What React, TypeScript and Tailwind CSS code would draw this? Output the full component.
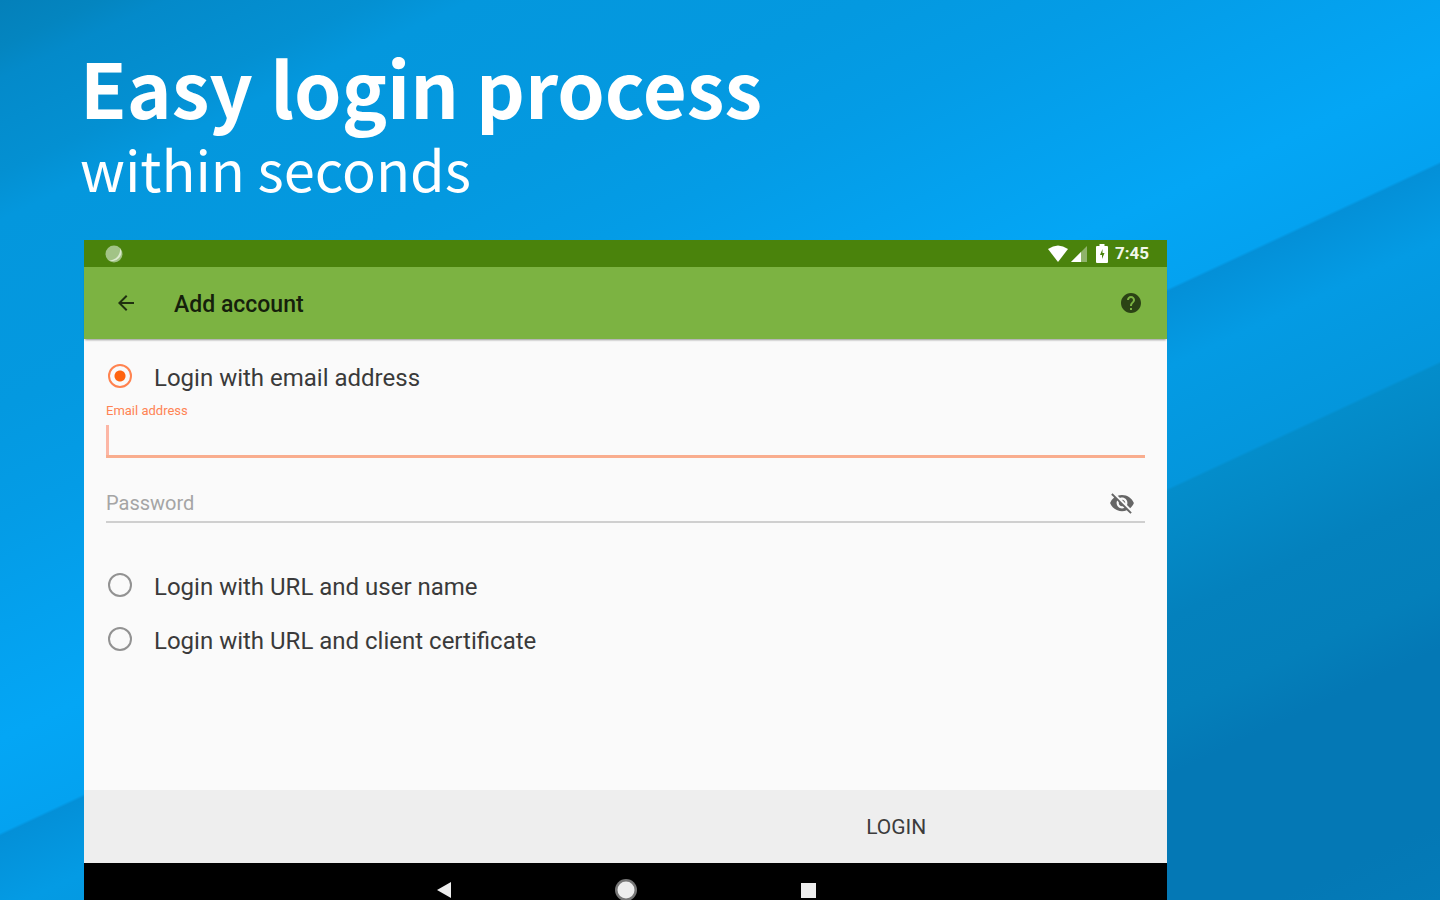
import { useState } from 'react'
import { MdArrowBack, MdHelp, MdVisibilityOff } from 'react-icons/md'

type Method = 'email' | 'url' | 'certificate'

function LoginOption({ label, checked, onSelect }: { label: string; checked: boolean; onSelect: () => void }) {
  return (
    <label className="flex h-[54px] cursor-pointer items-center gap-[22px] text-2xl text-[#3a3a3a]">
      <input
        type="radio"
        name="method"
        checked={checked}
        onChange={onSelect}
        className="ml-[2px] size-6 shrink-0 appearance-none rounded-full border-2 border-[#929292] checked:border-[#ff8350] checked:bg-[radial-gradient(circle,#ff6410_5px,transparent_6px)]"
      />
      <span className="pt-1">{label}</span>
    </label>
  )
}

function StatusBar() {
  return (
    <div className="flex h-[27px] shrink-0 items-center bg-[#4a830c] pr-[18px] pl-[21px]">
      <svg viewBox="0 0 18 18" className="size-[18px]">
        <circle cx="9" cy="9" r="8.5" fill="#a2c386" />
        <path d="M15 3a8.500 8.500 0 0 1-11 12c6 1 12-5 11-12z" fill="#dceacf" />
      </svg>
      <div className="ml-auto flex items-center">
        <svg viewBox="0 0 20 17" className="h-[17px] w-5" fill="#ffffff">
          <path d="M0 4Q10-3 20 4L10 17z" />
        </svg>
        <svg viewBox="0 0 16 16" className="ml-[3px] size-4">
          <path d="M16 0v16H0z" fill="#8fb36b" />
          <path d="M10 6v10H0z" fill="#ffffff" />
        </svg>
        <svg viewBox="0 0 12 19" className="ml-[9px] h-[19px] w-3">
          <path d="M3.500 0h5v2H11q1 0 1 1v15q0 1-1 1H1q-1 0-1-1V3q0-1 1-1h2.500z" fill="#ffffff" />
          <path d="M6.500 5L4 11h2v4l2.500-6h-2z" fill="#4a830c" />
        </svg>
        <span className="ml-[7px] text-[17px] leading-none font-bold text-[#f2f8ec]">7:45</span>
      </div>
    </div>
  )
}

function NavigationBar() {
  return (
    <nav className="flex h-[37px] shrink-0 items-center justify-center gap-[159px] overflow-hidden bg-black pt-4">
      <button type="button" aria-label="Back">
        <svg viewBox="0 0 22 22" className="size-[22px]" fill="#eeeeee">
          <path d="M3 11L17 3v16z" />
        </svg>
      </button>
      <button type="button" aria-label="Home">
        <svg viewBox="0 0 22 22" className="size-[22px]">
          <circle cx="11" cy="11" r="11" fill="#777777" />
          <circle cx="11" cy="11" r="8.500" fill="#eeeeee" />
        </svg>
      </button>
      <button type="button" aria-label="Overview">
        <svg viewBox="0 0 22 22" className="size-[22px]" fill="#eeeeee">
          <path d="M5 4h15v15H5z" />
        </svg>
      </button>
    </nav>
  )
}

export default function App() {
  const [method, setMethod] = useState<Method>('email')
  const [visible, setVisible] = useState(false)

  return (
    <main className="flex h-screen flex-col overflow-hidden bg-[linear-gradient(155deg,#0480ba_0%,#0485c0_3%,#048aca_5%,#0490d2_11%,#0497dd_14%,#0499e0_26%,#049ce6_33%,#04a1ee_40%,#04a6f5_47%,#04a2f0_53%,#0490d8_53.2%,#049be4_58%,#0496dc_65.700%,#048dcb_65.900%,#0489c6_69%,#0481bd_74%,#047fba_80%,#0478b5_84%,#0478b5_95%,#047bb8_100%)] pr-[273px] pl-21">
      <header className="-ml-1 h-60 shrink-0 pt-11 font-['Noto_Sans_CJK_SC',sans-serif] text-white">
        <h1 className="text-[76px] leading-[84px] font-bold whitespace-nowrap">Easy login process</h1>
        <p className="text-[56px] leading-[80px] whitespace-nowrap">within seconds</p>
      </header>

      <section className="flex min-h-0 flex-1 flex-col font-[Roboto,sans-serif]">
        <StatusBar />
        <div className="z-10 flex h-[72px] shrink-0 items-center bg-[#7cb342] pr-6 pl-[30px] shadow-[0_2px_2px_-1px_#00000066]">
          <button type="button" aria-label="Back">
            <MdArrowBack className="size-6 text-[#1f3010]" />
          </button>
          <h2 className="ml-9 pt-1 text-[23px] font-medium text-[#15200b]">Add account</h2>
          <button type="button" aria-label="Help" className="ml-auto">
            <MdHelp className="size-6 text-[#2b4215]" />
          </button>
        </div>

        <form className="flex min-h-0 flex-1 flex-col" onSubmit={e => e.preventDefault()}>
          <div className="min-h-0 flex-1 bg-[#fafafa] px-[22px] pt-[10px]">
            <LoginOption label="Login with email address" checked={method === 'email'} onSelect={() => setMethod('email')} />

            <label htmlFor="email" className="block h-[22px] text-[13px] leading-4 text-[#ff8354]">Email address</label>
            <div className="flex h-[33px] items-start border-b-3 border-[#f9ad8e]">
              <span className="h-[30px] w-[3px] bg-[#fcb6a5]" />
              <input id="email" type="email" className="h-[30px] min-w-0 flex-1 bg-transparent px-1 text-xl outline-none" />
            </div>

            <div className="mt-[26px] flex h-[39px] items-center border-b-2 border-[#cfcfcf] pr-[10px]">
              <input
                type={visible ? 'text' : 'password'}
                aria-label="Password"
                placeholder="Password"
                className="min-w-0 flex-1 bg-transparent text-xl text-[#333333] outline-none placeholder:text-[#a5a5a5]"
              />
              <button type="button" aria-label="Show password" onClick={() => setVisible(!visible)}>
                <MdVisibilityOff className="size-[26px] text-[#666666]" />
              </button>
            </div>

            <div className="mt-[35px]">
              <LoginOption label="Login with URL and user name" checked={method === 'url'} onSelect={() => setMethod('url')} />
              <LoginOption
                label="Login with URL and client certificate"
                checked={method === 'certificate'}
                onSelect={() => setMethod('certificate')}
              />
            </div>
          </div>
          <div className="grid h-[73px] shrink-0 grid-cols-2 bg-[#eeeeee]">
            <button type="submit" className="col-start-2 pt-0.5 text-[21px] text-[#3c3c3c]">LOGIN</button>
          </div>
        </form>
        <NavigationBar />
      </section>
    </main>
  )
}
